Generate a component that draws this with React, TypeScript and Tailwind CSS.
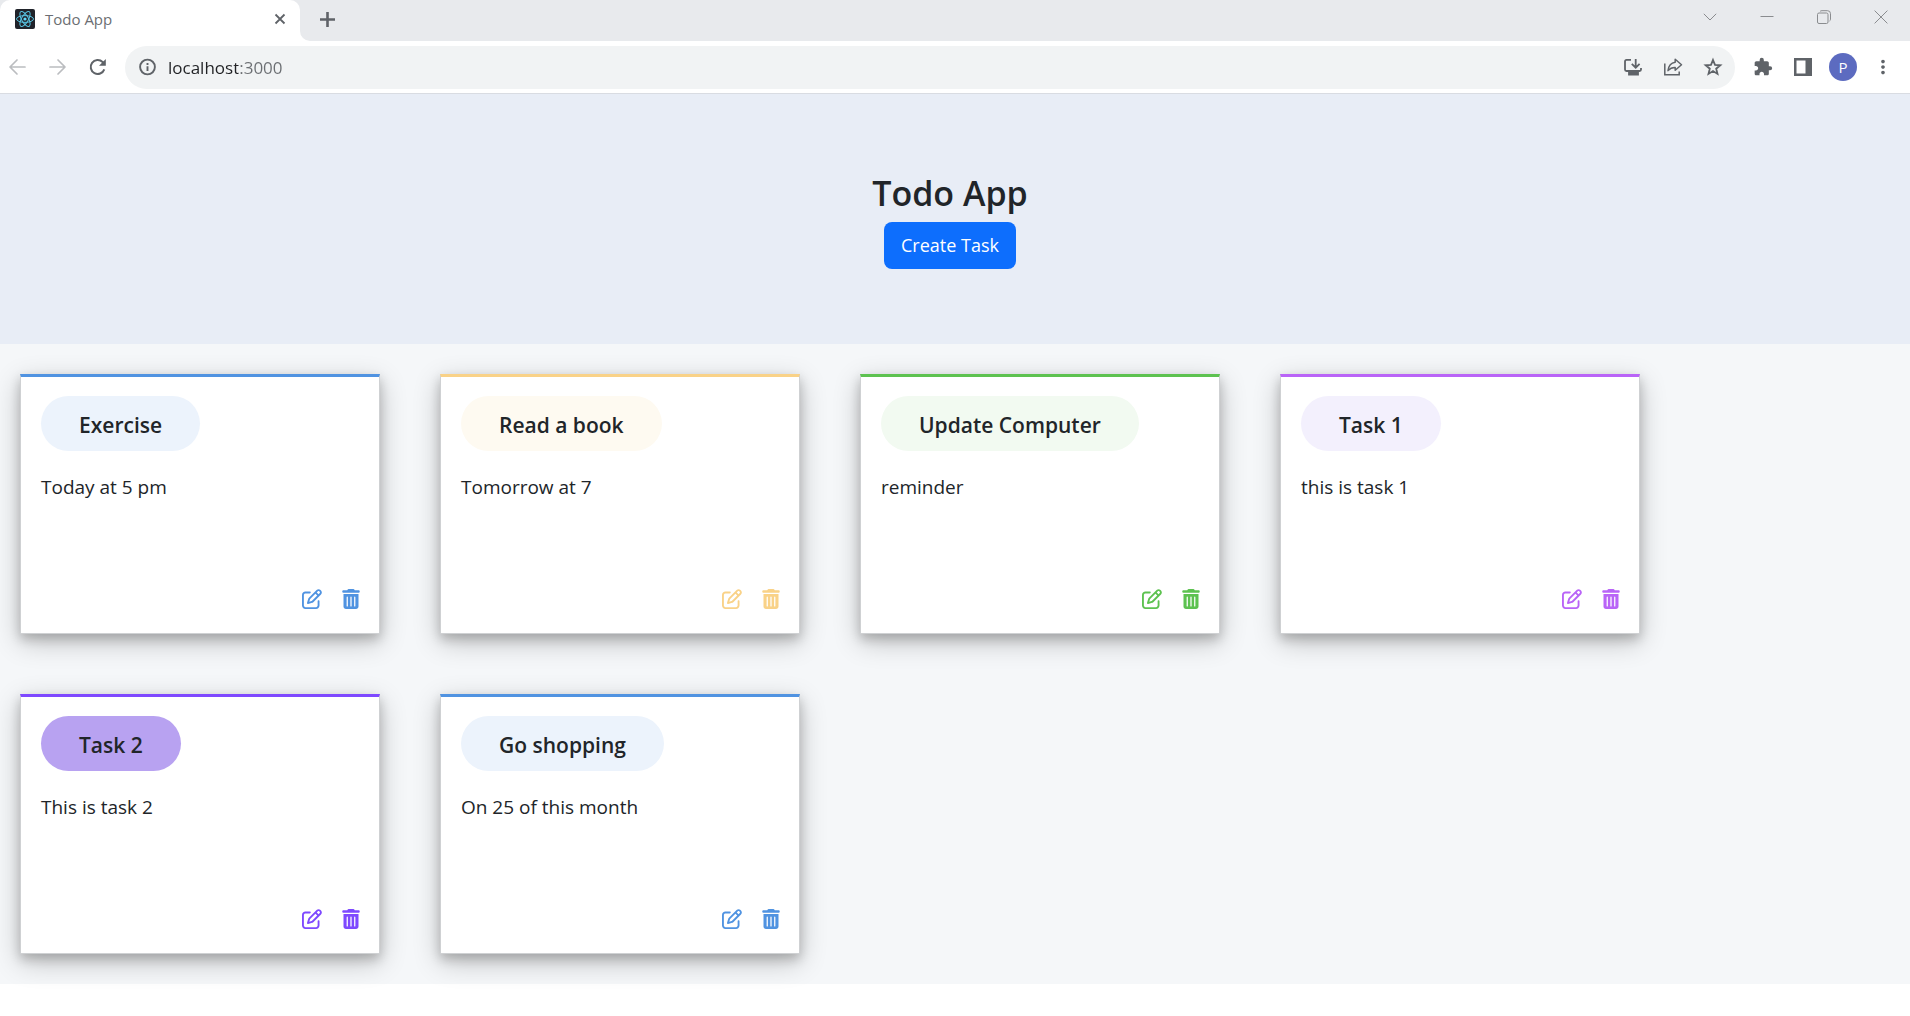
import type { ReactNode } from "react";
import { FaRegPenToSquare, FaTrashCan } from "react-icons/fa6";
import { MdExtension, MdMoreVert } from "react-icons/md";

type Task = {
  name: string;
  description: string;
  border: string;
  pill: string;
  icon: string;
};

const tasks: Task[] = [
  { name: "Exercise", description: "Today at 5 pm", border: "border-t-[#5093e1]", pill: "bg-[#ecf3fc]", icon: "text-[#5093e1]" },
  { name: "Read a book", description: "Tomorrow at 7", border: "border-t-[#f9d288]", pill: "bg-[#fefaf1]", icon: "text-[#f9d288]" },
  { name: "Update Computer", description: "reminder", border: "border-t-[#5dc250]", pill: "bg-[#f2faf1]", icon: "text-[#5dc250]" },
  { name: "Task 1", description: "this is task 1", border: "border-t-[#b964f7]", pill: "bg-[#f3f0fd]", icon: "text-[#b964f7]" },
  { name: "Task 2", description: "This is task 2", border: "border-t-[#7e49ff]", pill: "bg-[#b8a2f1]", icon: "text-[#7e49ff]" },
  { name: "Go shopping", description: "On 25 of this month", border: "border-t-[#5093e1]", pill: "bg-[#ecf3fc]", icon: "text-[#5093e1]" },
];

function IconButton({ label, className, children }: { label: string; className: string; children: ReactNode }) {
  return (
    <button type="button" aria-label={label} className={`flex shrink-0 items-center justify-center ${className}`}>
      {children}
    </button>
  );
}

function ReactLogo() {
  return (
    <svg viewBox="0 0 20 20" className="size-5 shrink-0" aria-hidden="true">
      <rect width="20" height="20" rx="2" fill="#20232a" />
      <g fill="none" stroke="#58c4e2" strokeWidth="1">
        <ellipse cx="10" cy="10" rx="8.5" ry="3.4" />
        <ellipse cx="10" cy="10" rx="8.5" ry="3.4" transform="rotate(60 10 10)" />
        <ellipse cx="10" cy="10" rx="8.5" ry="3.4" transform="rotate(120 10 10)" />
      </g>
      <circle cx="10" cy="10" r="1.6" fill="#61dafb" />
    </svg>
  );
}

function TabStrip() {
  return (
    <div className="flex h-[41px] bg-[#e8eaed]">
      <div className="relative flex w-[300px] items-center rounded-t-[10px] bg-white pb-[3px] pl-[15px] pr-2.5">
        <ReactLogo />
        <span className="ml-2.5 flex-1 text-[15px] leading-5 text-[#6b6e72]">Todo App</span>
        <IconButton label="Close tab" className="size-5">
          <svg viewBox="0 0 20 20" className="size-5" fill="none" stroke="#5f6368" strokeWidth="1.8">
            <path d="M5.500 5.500l9 9M14.500 5.500l-9 9" />
          </svg>
        </IconButton>
        <svg viewBox="0 0 10 10" className="absolute bottom-0 left-full size-2.5" aria-hidden="true">
          <path d="M0 0A10 10 0 0 0 10 10H0Z" fill="#fff" />
        </svg>
      </div>
      <IconButton label="New tab" className="ml-4 mb-[3px] w-[22px]">
        <svg viewBox="0 0 20 20" className="size-5" fill="none" stroke="#5f6368" strokeWidth="2.600">
          <path d="M10.500 3v15M3 10.500h15" />
        </svg>
      </IconButton>
      <div className="ml-auto flex pb-2 pr-px">
        <IconButton label="Search tabs" className="w-[57px]">
          <svg viewBox="0 0 14 14" className="size-3.5" fill="none" stroke="#8a8c8f" strokeWidth="1">
            <path d="M0.8 3.8L7 10l6.200-6.200" />
          </svg>
        </IconButton>
        <IconButton label="Minimize" className="w-[57px]">
          <svg viewBox="0 0 14 14" className="size-3.5" fill="none" stroke="#8a8c8f" strokeWidth="1">
            <path d="M0.500 6.500h13" />
          </svg>
        </IconButton>
        <IconButton label="Restore" className="w-[57px]">
          <svg viewBox="0 0 14 14" className="size-3.5" fill="none" stroke="#8a8c8f" strokeWidth="1">
            <rect x="0.500" y="3" width="10.500" height="10.500" rx="1.500" />
            <path d="M3 1.500Q3.500 0.700 5 0.700h5.500a3 3 0 0 1 3 3v5.500Q13.500 10.500 12.500 11" />
          </svg>
        </IconButton>
        <IconButton label="Close window" className="w-[57px]">
          <svg viewBox="0 0 14 14" className="size-3.5" fill="none" stroke="#8a8c8f" strokeWidth="1">
            <path d="M0.600 0.600l12.800 12.800M13.400 0.600L0.600 13.400" />
          </svg>
        </IconButton>
      </div>
    </div>
  );
}

function Toolbar() {
  return (
    <div className="flex h-[53px] items-center border-b border-[#d9dce2] bg-white pl-2 pr-[7px]">
      <div className="flex gap-5">
        <IconButton label="Back" className="size-5">
          <svg viewBox="0 0 20 20" className="size-5" fill="none" stroke="#bbbdc0" strokeWidth="1.700" strokeLinecap="round" strokeLinejoin="round">
            <path d="M17 10H2.500M9 3L2 10l7 7" />
          </svg>
        </IconButton>
        <IconButton label="Forward" className="size-5">
          <svg viewBox="0 0 20 20" className="size-5" fill="none" stroke="#bbbdc0" strokeWidth="1.700" strokeLinecap="round" strokeLinejoin="round">
            <path d="M2 10h14.500M10 3l7 7-7 7" />
          </svg>
        </IconButton>
        <IconButton label="Reload" className="size-5">
          <svg viewBox="0 0 20 20" className="size-5" fill="none" stroke="#5f6368" strokeWidth="2">
            <path d="M16.300 12.400A7 7 0 1 1 14.600 5L16.500 7" />
            <path d="M17.800 2v6.800H11z" fill="#5f6368" stroke="none" />
          </svg>
        </IconButton>
      </div>
      <div className="ml-[17px] flex h-[43px] flex-1 items-center rounded-full bg-[#f1f3f4] pl-3 pr-0.5 text-[#5f6368]">
        <svg viewBox="0 0 20 20" className="size-5" fill="none" stroke="#5f6368" strokeWidth="1.900" aria-hidden="true">
          <circle cx="10.500" cy="10" r="7.400" />
          <path d="M10.500 9.200v4.800M10.500 5.900v2" />
        </svg>
        <input
          type="text"
          aria-label="Address"
          defaultValue="localhost:3000"
          className="ml-[11px] min-w-0 flex-1 bg-linear-to-r from-[#202124] from-[70px] to-[#6b6e72] to-[70px] bg-clip-text pt-px text-[17px] leading-6 text-transparent caret-black outline-none"
        />
        <IconButton label="Install app" className="h-10 w-10">
          <svg viewBox="0 0 20 20" className="size-5" fill="none" stroke="#5f6368" strokeWidth="1.800">
            <path d="M8 2.900H3.500Q2 2.900 2 4.400v8.200Q2 14 3.500 14h13Q18 14 18 12.600V11" />
            <path d="M12.700 2v8M8.800 6.800l3.900 3.900 3.900-3.900" />
            <path d="M6 15v2.500h9V15z" fill="#5f6368" />
          </svg>
        </IconButton>
        <IconButton label="Share" className="h-10 w-10">
          <svg viewBox="0 0 20 20" className="size-5" fill="none" stroke="#5f6368" strokeWidth="1.500">
            <path d="M1.800 6.500v11.200h14.400V14.500" />
            <path d="M12.200 2.200L18.500 7.800l-6.300 5.400V10.400C9 10.300 7 11.300 5 13.600 5.500 9.500 8 5.800 12.200 5.200Z" strokeLinejoin="round" />
          </svg>
        </IconButton>
        <IconButton label="Bookmark" className="h-10 w-10">
          <svg viewBox="0 0 20 20" className="size-5" fill="none" stroke="#5f6368" strokeWidth="1.800">
            <path d="M10 3l2 4.900 5.300.4-4.100 3.400 1.300 5.200L10 14.100l-4.500 2.800 1.300-5.200-4.100-3.400 5.300-.4z" />
          </svg>
        </IconButton>
      </div>
      <div className="ml-2 flex items-center text-[#5f6368]">
        <IconButton label="Extensions" className="h-10 w-10">
          <MdExtension className="size-5" />
        </IconButton>
        <IconButton label="Side panel" className="h-10 w-10">
          <svg viewBox="0 0 18 18" className="size-[18px]" aria-hidden="true">
            <path d="M0 0h18v18H0zM2.500 2.500v13h9v-13z" fill="#5f6368" fillRule="evenodd" />
          </svg>
        </IconButton>
        <IconButton label="Profile" className="h-10 w-10">
          <span className="flex size-7 items-center justify-center rounded-full bg-[#5c6bc0] text-[15px] leading-5 text-white">P</span>
        </IconButton>
        <IconButton label="Menu" className="h-10 w-10">
          <MdMoreVert className="size-[22px]" />
        </IconButton>
      </div>
    </div>
  );
}

function TaskCard({ task }: { task: Task }) {
  return (
    <article
      className={`flex h-[260px] w-[360px] flex-col items-start border border-t-[3px] border-[#cfd1d3] bg-white pb-6 pl-5 pr-[19px] pt-[19px] shadow-[0_5px_10px_rgba(0,0,0,0.19),0_8px_25px_rgba(0,0,0,0.23)] ${task.border}`}
    >
      <h2 className={`flex h-[55px] items-center rounded-full px-[38px] pt-0.5 text-[21px] font-semibold leading-7 ${task.pill}`}>{task.name}</h2>
      <p className="mt-[22px] text-[19px] leading-7">{task.description}</p>
      <div className={`mt-auto flex gap-5 self-end ${task.icon}`}>
        <button type="button" aria-label={`Edit ${task.name}`}>
          <FaRegPenToSquare className="size-5" />
        </button>
        <button type="button" aria-label={`Delete ${task.name}`}>
          <FaTrashCan className="h-5 w-[18px]" />
        </button>
      </div>
    </article>
  );
}

export default function App() {
  return (
    <div className="min-h-screen bg-white font-['Open_Sans','Noto_Sans',sans-serif] text-[#212529]">
      <TabStrip />
      <Toolbar />
      <header className="flex h-[250px] flex-col items-center justify-center bg-[#e8edf6] pr-2.5 pt-0.5">
        <h1 className="text-[34px] font-semibold leading-[42px]">Todo App</h1>
        <button type="button" className="mt-2 h-[47px] rounded-lg bg-[#0d6efd] px-[17px] text-[18px] leading-7 text-white">
          Create Task
        </button>
      </header>
      <main className="flex flex-wrap gap-[60px] bg-[#f5f7f9] px-5 py-[30px]">
        {tasks.map((task) => (
          <TaskCard key={task.name} task={task} />
        ))}
      </main>
    </div>
  );
}
